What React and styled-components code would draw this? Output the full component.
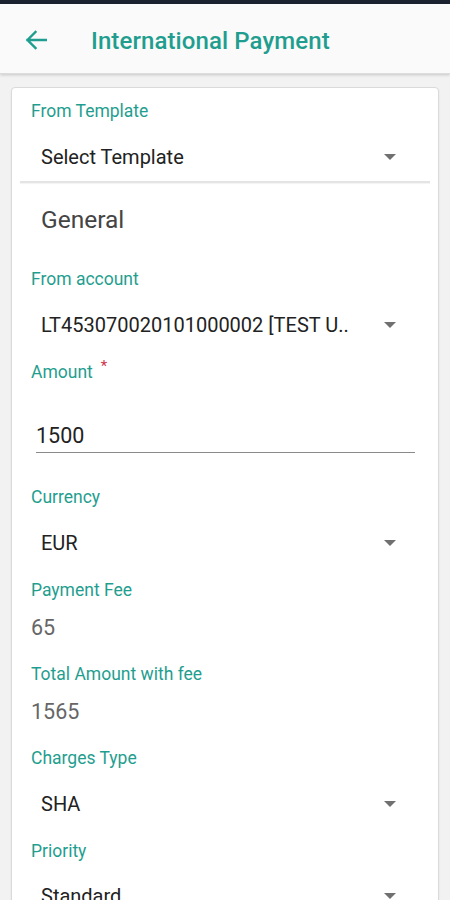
import React from "react";
import styled, { createGlobalStyle } from "styled-components";

const Global = createGlobalStyle`
  html, body { margin: 0; padding: 0; }
  body {
    background: #f2f2f2;
    font-family: Roboto, "Noto Sans", Arial, sans-serif;
    width: 450px;
    height: 900px;
    overflow: hidden;
  }
`;

const teal = "#1f9e8f";

const Page = styled.div`
  display: flex;
  flex-direction: column;
  width: 450px;
  min-height: 900px;
  background: #f2f2f2;
`;

const StatusStrip = styled.div`
  height: 4px;
  background: #1b2330;
`;

const Header = styled.header`
  height: 70px;
  display: flex;
  align-items: center;
  background: #fafafa;
  box-shadow: 0 1px 3px rgba(0, 0, 0, 0.18);
  border-bottom: 1px solid #dcdcdc;
  box-sizing: border-box;
  padding: 5px 0 0 24px;
`;

const BackButton = styled.button`
  border: none;
  background: none;
  padding: 0;
  width: 23px;
  height: 22px;
  display: flex;
  align-items: center;
  justify-content: center;
  margin-right: 44px;
  margin-top: -2px;
  color: ${teal};
`;

const Title = styled.h1`
  margin: 0;
  font-size: 24px;
  font-weight: 500;
  color: ${teal};
  letter-spacing: 0.1px;
`;

const Card = styled.section`
  margin: 13px 11px 0 11px;
  background: #fff;
  border: 1px solid #dadada;
  border-radius: 4px;
  box-shadow: 0 1px 2px rgba(0, 0, 0, 0.08);
  padding: 12px 0 40px;
`;

const Label = styled.div`
  height: 22px;
  line-height: 22px;
  padding-left: 19px;
  font-size: 17.5px;
  color: ${teal};
  display: flex;
  align-items: flex-start;
`;

const Required = styled.span`
  color: #d0344a;
  font-size: 15px;
  line-height: 15px;
  margin-left: 8px;
  margin-top: -2px;
`;

const Field = styled.div`
  padding-top: ${(p) => p.$top}px;
`;

const SelectRow = styled.div`
  display: flex;
  align-items: center;
  justify-content: space-between;
  height: 22px;
  margin-top: ${(p) => p.$mt}px;
  padding: 0 42px 0 29px;
  padding-bottom: ${(p) => p.$pb || 0}px;
  font-size: 20px;
  color: #222;
`;

const SelectText = styled.span`
  line-height: 22px;
  white-space: nowrap;
`;

const Caret = styled.span`
  width: 0;
  height: 0;
  border-left: 6px solid transparent;
  border-right: 6px solid transparent;
  border-top: 6px solid #707070;
`;

const Divider = styled.div`
  height: 2px;
  margin: 0 8px;
  background: #e4e4e4;
  box-shadow: 0 1px 1px rgba(0, 0, 0, 0.05);
`;

const SectionTitle = styled.h2`
  margin: 22px 0 0;
  padding-left: 29px;
  height: 30px;
  line-height: 30px;
  font-size: 24.5px;
  font-weight: 400;
  color: #444;
`;

const InputWrap = styled.div`
  margin: 41px 23px 0 24px;
  border-bottom: 1px solid #8a8a8a;
  padding-bottom: 4px;
`;

const InputText = styled.div`
  height: 24px;
  line-height: 24px;
  font-size: 21.5px;
  color: #222;
`;

const ReadValue = styled.div`
  margin-top: 16px;
  padding-left: 19px;
  height: 22px;
  line-height: 22px;
  font-size: 21.5px;
  color: #666;
`;

function Select({ value, mt = 24, pb }) {
  return (
    <SelectRow $mt={mt} $pb={pb}>
      <SelectText>{value}</SelectText>
      <Caret />
    </SelectRow>
  );
}

export default function App() {
  return (
    <>
      <Global />
      <Page>
        <StatusStrip />
        <Header>
          <BackButton aria-label="Back">
            <svg width="22" height="20" viewBox="0 0 22 20" fill="none">
              <path
                d="M21 10H2.5M10.5 2L2.5 10l8 8"
                stroke="currentColor"
                strokeWidth="2.4"
                strokeLinecap="square"
                strokeLinejoin="miter"
              />
            </svg>
          </BackButton>
          <Title>International Payment</Title>
        </Header>
        <Card>
          <Label>From Template</Label>
          <Select value="Select Template" mt={24} pb={13} />
          <Divider />
          <SectionTitle>General</SectionTitle>
          <Field $top={33}>
            <Label>From account</Label>
            <Select value="LT453070020101000002 [TEST U.." />
          </Field>
          <Field $top={25}>
            <Label>
              Amount<Required>*</Required>
            </Label>
            <InputWrap>
              <InputText>1500</InputText>
            </InputWrap>
          </Field>
          <Field $top={33}>
            <Label>Currency</Label>
            <Select value="EUR" />
          </Field>
          <Field $top={25}>
            <Label>Payment Fee</Label>
            <ReadValue>65</ReadValue>
          </Field>
          <Field $top={24}>
            <Label>Total Amount with fee</Label>
            <ReadValue>1565</ReadValue>
          </Field>
          <Field $top={24}>
            <Label>Charges Type</Label>
            <Select value="SHA" />
          </Field>
          <Field $top={25}>
            <Label>Priority</Label>
            <Select value="Standard" mt={23} />
          </Field>
        </Card>
      </Page>
    </>
  );
}
